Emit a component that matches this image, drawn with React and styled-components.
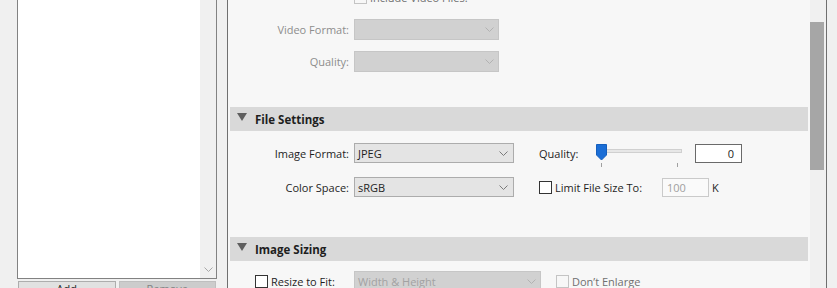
import React from 'react';
import styled, { createGlobalStyle } from 'styled-components';

const GlobalStyle = createGlobalStyle`
  html, body {
    margin: 0;
    padding: 0;
  }
  body {
    background: #f0f0f0;
    font-family: "Open Sans", "Noto Sans", sans-serif;
    font-size: 11px;
    color: #1e1e1e;
    overflow: hidden;
  }
`;

const Window = styled.div`
  display: flex;
  width: 837px;
  height: 288px;
  overflow: hidden;
`;

const LeftPane = styled.div`
  flex: none;
  width: 227px;
  box-sizing: border-box;
  padding: 0 10px 0 17px;
  display: flex;
  flex-direction: column;
`;

const ListBox = styled.div`
  flex: none;
  height: 299px;
  margin-top: -20px;
  box-sizing: border-box;
  border: 1px solid #828282;
  background: #fff;
  display: flex;
  justify-content: flex-end;
`;

const ListScroll = styled.div`
  width: 16px;
  background: #f0f0f0;
  display: flex;
  flex-direction: column;
  justify-content: flex-end;
  align-items: center;
  padding-bottom: 6px;
  box-sizing: border-box;
`;

const ButtonRow = styled.div`
  display: flex;
  gap: 3px;
  padding: 0 1px;
  margin-top: 2px;
`;

const PushButton = styled.button`
  flex: 1;
  height: 23px;
  padding: 0 0 7px;
  font: inherit;
  line-height: 14px;
  border: 1px solid ${p => (p.disabled ? '#bfbfbf' : '#adadad')};
  background: ${p => (p.disabled ? '#cccccc' : '#e1e1e1')};
  color: ${p => (p.disabled ? '#838383' : '#1e1e1e')};
`;

const Panel = styled.div`
  flex: none;
  width: 600px;
  height: 288px;
  box-sizing: border-box;
  border-left: 1px solid #6f6f6f;
  border-right: 1px solid #6f6f6f;
  background: #f7f7f7;
  display: flex;
`;

const PanelBody = styled.div`
  flex: 1;
  overflow: hidden;
  padding: 0 2px;
`;

const Scrolled = styled.div`
  margin-top: -13px;
`;

const ScrollTrack = styled.div`
  flex: none;
  width: 16px;
  background: #f0f0f0;
`;

const ScrollThumb = styled.div`
  width: 14px;
  height: 148px;
  margin-top: 22px;
  background: #a6a6a6;
`;

const Group = styled.div`
  display: flex;
  flex-direction: column;
  gap: ${p => p.$gap}px;
  padding: ${p => p.$top}px 0 ${p => p.$bottom}px;
`;

const Row = styled.div`
  display: flex;
  align-items: center;
  height: ${p => p.$h}px;
  padding-left: ${p => p.$indent || 0}px;
`;

const Label = styled.span`
  flex: none;
  width: ${p => p.$w}px;
  margin-right: 5px;
  text-align: right;
  white-space: nowrap;
  color: ${p => (p.$disabled ? '#8d8d8d' : '#1e1e1e')};
`;

const Spacer = styled.span`
  flex: none;
  width: ${p => p.$w}px;
`;

const SelectBox = styled.div`
  flex: none;
  width: ${p => p.$w}px;
  height: ${p => p.$h}px;
  box-sizing: border-box;
  display: flex;
  align-items: center;
  justify-content: space-between;
  padding: 0 ${p => (p.$disabled ? 4 : 5)}px 0 3px;
  border: 1px solid ${p => (p.$disabled ? '#c6c6c6' : '#acacac')};
  background: ${p => (p.$disabled ? '#d1d1d1' : '#e4e4e4')};
  color: ${p => (p.$disabled ? '#a2a2a2' : '#1e1e1e')};
  white-space: nowrap;
`;

const Header = styled.div`
  height: 24px;
  background: #d9d9d9;
  display: flex;
  align-items: center;
  gap: 8px;
  padding-left: 7px;
  font-weight: 700;
  font-size: 11.5px;
  color: #1e1e1e;
`;

const CheckField = styled.label`
  flex: none;
  display: flex;
  align-items: center;
  gap: 3px;
  width: ${p => (p.$w ? `${p.$w}px` : 'auto')};
  margin-left: ${p => p.$ml || 0}px;
  white-space: nowrap;
  color: ${p => (p.$disabled ? '#707070' : '#1e1e1e')};
`;

const Box = styled.span`
  flex: none;
  width: 13px;
  height: 13px;
  box-sizing: border-box;
  border: 1px solid ${p => (p.$disabled ? '#c4c4c4' : '#333333')};
  background: ${p => (p.$disabled ? '#f7f7f7' : '#ffffff')};
`;

const SideLabel = styled.span`
  flex: none;
  width: 55px;
  margin-left: 25px;
`;

const NumberField = styled.div`
  flex: none;
  width: 47px;
  height: 19px;
  box-sizing: border-box;
  margin-left: ${p => p.$ml || 0}px;
  display: flex;
  align-items: center;
  justify-content: ${p => (p.$disabled ? 'flex-start' : 'flex-end')};
  padding: 0 7px 0 4px;
  border: 1px solid ${p => (p.$disabled ? '#cacaca' : '#6a6a6a')};
  background: ${p => (p.$disabled ? '#fafafa' : '#ffffff')};
  color: ${p => (p.$disabled ? '#a0a0a0' : '#1e1e1e')};
`;

const Unit = styled.span`
  margin-left: 3px;
`;

const Chevron = ({ color }) => (
  <svg width="9" height="5" viewBox="0 0 9 5">
    <polyline points="0.5,0.5 4.5,4.5 8.5,0.5" fill="none" stroke={color} strokeWidth="1" />
  </svg>
);

const Triangle = () => (
  <svg width="10" height="8" viewBox="0 0 10 8" style={{ marginTop: -5 }}>
    <polygon points="0,0 10,0 5,8" fill="#5f5f5f" />
  </svg>
);

const Slider = () => (
  <svg width="92" height="30" viewBox="0 0 92 30" style={{ flex: 'none' }}>
    <rect x="5.5" y="11.5" width="82" height="3" fill="#e7e7e7" stroke="#d0d0d0" />
    <line x1="7.5" y1="25" x2="7.5" y2="29" stroke="#a0a0a0" />
    <line x1="83.5" y1="25" x2="83.5" y2="29" stroke="#a0a0a0" />
    <polygon points="2.5,6.5 12.5,6.5 12.5,17 7.5,22 2.5,17" fill="#1b6ed6" stroke="#155fbd" />
  </svg>
);

function Select({ value, width, height, disabled }) {
  return (
    <SelectBox $w={width} $h={height} $disabled={disabled}>
      <span>{value}</span>
      <Chevron color={disabled ? '#b2b2b2' : '#7a7a7a'} />
    </SelectBox>
  );
}

function Check({ label, disabled, width, ml }) {
  return (
    <CheckField $disabled={disabled} $w={width} $ml={ml}>
      <Box $disabled={disabled} />
      <span>{label}</span>
    </CheckField>
  );
}

export default function App() {
  return (
    <>
      <GlobalStyle />
      <Window>
        <LeftPane>
          <ListBox>
            <ListScroll>
              <Chevron color="#a8a8a8" />
            </ListScroll>
          </ListBox>
          <ButtonRow>
            <PushButton>Add</PushButton>
            <PushButton disabled>Remove</PushButton>
          </ButtonRow>
        </LeftPane>

        <Panel>
          <PanelBody>
            <Scrolled>
              <Group $gap={11} $top={0} $bottom={35}>
                <Row $h={21}>
                  <Spacer $w={124} />
                  <Check label="Include Video Files:" disabled />
                </Row>
                <Row $h={21}>
                  <Label $w={119} $disabled>Video Format:</Label>
                  <Select value="" width={145} height={21} disabled />
                </Row>
                <Row $h={21}>
                  <Label $w={119} $disabled>Quality:</Label>
                  <Select value="" width={145} height={21} disabled />
                </Row>
              </Group>

              <Header>
                <Triangle />
                File Settings
              </Header>
              <Group $gap={14} $top={12} $bottom={40}>
                <Row $h={20}>
                  <Label $w={119}>Image Format:</Label>
                  <Select value="JPEG" width={160} height={20} />
                  <SideLabel>Quality:</SideLabel>
                  <Slider />
                  <NumberField $ml={9}>0</NumberField>
                </Row>
                <Row $h={20}>
                  <Label $w={119}>Color Space:</Label>
                  <Select value="sRGB" width={160} height={20} />
                  <Check label="Limit File Size To:" width={123} ml={25} />
                  <NumberField $disabled>100</NumberField>
                  <Unit>K</Unit>
                </Row>
              </Group>

              <Header>
                <Triangle />
                Image Sizing
              </Header>
              <Group $gap={14} $top={10} $bottom={20}>
                <Row $h={20} $indent={25}>
                  <Check label="Resize to Fit:" width={99} />
                  <Select value="Width & Height" width={187} height={20} disabled />
                  <Check label="Don’t Enlarge" disabled ml={15} />
                </Row>
              </Group>
            </Scrolled>
          </PanelBody>
          <ScrollTrack>
            <ScrollThumb />
          </ScrollTrack>
        </Panel>
      </Window>
    </>
  );
}
